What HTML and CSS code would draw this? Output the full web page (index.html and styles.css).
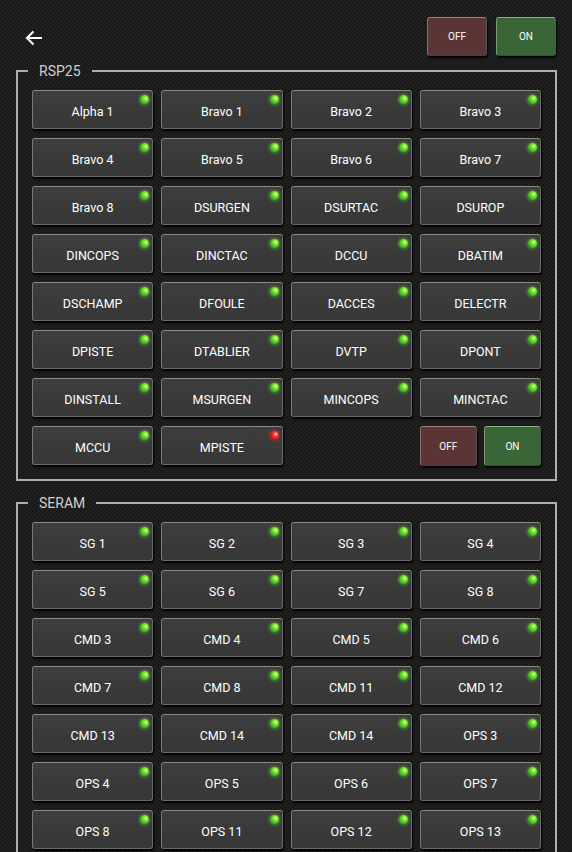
FILE: index.html
```html
<!DOCTYPE html>
<html>
<head>
<meta charset="utf-8">
<link rel="stylesheet" href="styles.css">
</head>
<body>
<div class="page">
  <header class="topbar">
    <button class="back" aria-label="Retour">
      <svg width="18" height="16" viewBox="0 0 18 16"><path d="M17 8H2.5M8.5 1.5L2 8l6.5 6.5" fill="none" stroke="#fff" stroke-width="2.2"/></svg>
    </button>
    <div class="switches">
      <button class="sw off">OFF</button>
      <button class="sw on">ON</button>
    </div>
  </header>

  <fieldset class="group">
    <legend>RSP25</legend>
    <div class="grid">
      <button class="key">Alpha 1<i class="led"></i></button>
      <button class="key">Bravo 1<i class="led"></i></button>
      <button class="key">Bravo 2<i class="led"></i></button>
      <button class="key">Bravo 3<i class="led"></i></button>
      <button class="key">Bravo 4<i class="led"></i></button>
      <button class="key">Bravo 5<i class="led"></i></button>
      <button class="key">Bravo 6<i class="led"></i></button>
      <button class="key">Bravo 7<i class="led"></i></button>
      <button class="key">Bravo 8<i class="led"></i></button>
      <button class="key">DSURGEN<i class="led"></i></button>
      <button class="key">DSURTAC<i class="led"></i></button>
      <button class="key">DSUROP<i class="led"></i></button>
      <button class="key">DINCOPS<i class="led"></i></button>
      <button class="key">DINCTAC<i class="led"></i></button>
      <button class="key">DCCU<i class="led"></i></button>
      <button class="key">DBATIM<i class="led"></i></button>
      <button class="key">DSCHAMP<i class="led"></i></button>
      <button class="key">DFOULE<i class="led"></i></button>
      <button class="key">DACCES<i class="led"></i></button>
      <button class="key">DELECTR<i class="led"></i></button>
      <button class="key">DPISTE<i class="led"></i></button>
      <button class="key">DTABLIER<i class="led"></i></button>
      <button class="key">DVTP<i class="led"></i></button>
      <button class="key">DPONT<i class="led"></i></button>
      <button class="key">DINSTALL<i class="led"></i></button>
      <button class="key">MSURGEN<i class="led"></i></button>
      <button class="key">MINCOPS<i class="led"></i></button>
      <button class="key">MINCTAC<i class="led"></i></button>
      <button class="key">MCCU<i class="led"></i></button>
      <button class="key">MPISTE<i class="led red"></i></button>
      <div class="spacer"></div>
      <div class="pair">
        <button class="sw off">OFF</button>
        <button class="sw on">ON</button>
      </div>
    </div>
  </fieldset>

  <fieldset class="group">
    <legend>SERAM</legend>
    <div class="grid">
      <button class="key">SG 1<i class="led"></i></button>
      <button class="key">SG 2<i class="led"></i></button>
      <button class="key">SG 3<i class="led"></i></button>
      <button class="key">SG 4<i class="led"></i></button>
      <button class="key">SG 5<i class="led"></i></button>
      <button class="key">SG 6<i class="led"></i></button>
      <button class="key">SG 7<i class="led"></i></button>
      <button class="key">SG 8<i class="led"></i></button>
      <button class="key">CMD 3<i class="led"></i></button>
      <button class="key">CMD 4<i class="led"></i></button>
      <button class="key">CMD 5<i class="led"></i></button>
      <button class="key">CMD 6<i class="led"></i></button>
      <button class="key">CMD 7<i class="led"></i></button>
      <button class="key">CMD 8<i class="led"></i></button>
      <button class="key">CMD 11<i class="led"></i></button>
      <button class="key">CMD 12<i class="led"></i></button>
      <button class="key">CMD 13<i class="led"></i></button>
      <button class="key">CMD 14<i class="led"></i></button>
      <button class="key">CMD 14<i class="led"></i></button>
      <button class="key">OPS 3<i class="led"></i></button>
      <button class="key">OPS 4<i class="led"></i></button>
      <button class="key">OPS 5<i class="led"></i></button>
      <button class="key">OPS 6<i class="led"></i></button>
      <button class="key">OPS 7<i class="led"></i></button>
      <button class="key">OPS 8<i class="led"></i></button>
      <button class="key">OPS 11<i class="led"></i></button>
      <button class="key">OPS 12<i class="led"></i></button>
      <button class="key">OPS 13<i class="led"></i></button>
    </div>
  </fieldset>
</div>
</body>
</html>
```

FILE: styles.css
```css
html, body {
  margin: 0;
  padding: 0;
  height: 100%;
  overflow: hidden;
}
body {
  background-color: #202020;
  background-image:
    linear-gradient(45deg, rgba(0,0,0,0.22) 25%, transparent 25%, transparent 75%, rgba(0,0,0,0.22) 75%),
    linear-gradient(45deg, rgba(0,0,0,0.22) 25%, transparent 25%, transparent 75%, rgba(0,0,0,0.22) 75%);
  background-size: 4px 4px;
  background-position: 0 0, 2px 2px;
  font-family: Roboto, "Liberation Sans", Arial, sans-serif;
  color: #fff;
}
.page {
  padding: 0 15px 0 16px;
}
.topbar {
  display: flex;
  align-items: center;
  justify-content: space-between;
  padding: 17px 3px 0 8px;
  height: 39px;
  margin-bottom: 7px;
}
.back {
  background: none;
  border: 0;
  padding: 0;
  width: 20px;
  height: 20px;
  display: flex;
  align-items: center;
  justify-content: center;
  margin-top: 3px;
}
.switches {
  display: flex;
  gap: 9px;
  margin-right: -2px;
}
.switches .sw {
  width: 60px;
  height: 39px;
}
.sw {
  border: 1px solid #8a8a8a;
  border-right-color: #555;
  border-bottom-color: #444;
  border-radius: 3px;
  color: #fff;
  font-family: Roboto, "Liberation Sans", Arial, sans-serif;
  font-size: 10px;
  font-weight: 400;
  box-shadow: 1px 2px 2px rgba(0,0,0,0.9);
  padding: 0;
}
.sw.off { background: #5b3535; border-top-color: #9a8080; border-left-color: #8a7070; }
.sw.on { background: #3a6536; border-top-color: #8fb08a; border-left-color: #7a9a75; }

.group {
  margin: 0;
  border: 2px solid #aeaeae;
  padding: 11px 14px 13px 14px;
}
.group + .group {
  margin-top: 14px;
}
.group legend {
  color: #cfcfcf;
  font-size: 14px;
  line-height: 16px;
  padding: 0 11px;
  margin-left: -4px;
}
.grid {
  display: grid;
  grid-template-columns: repeat(4, 1fr);
  gap: 9px 8px;
}
.key {
  position: relative;
  height: 39px;
  background: linear-gradient(#3d3d3d, #373737);
  border: 1px solid #6a6a6a;
  border-top-color: #8a8a8a;
  border-left-color: #7a7a7a;
  border-radius: 3px;
  box-shadow: 1px 2px 2px rgba(0,0,0,0.95);
  color: #fff;
  font-family: Roboto, "Liberation Sans", Arial, sans-serif;
  font-size: 12.5px;
  font-weight: 400;
  padding: 3px 0 0;
}
.led {
  position: absolute;
  top: 4px;
  right: 3px;
  width: 9px;
  height: 9px;
  border-radius: 50%;
  background: radial-gradient(circle at 65% 35%, #e8ffd0 0, #8cf040 22%, #4cc420 55%, #2d8a10 100%);
  box-shadow: 0 0 3px 1px rgba(90, 220, 40, 0.55);
}
.led.red {
  background: radial-gradient(circle at 65% 35%, #ffe0e0 0, #ff4040 25%, #d01818 60%, #8a0a0a 100%);
  box-shadow: 0 0 3px 1px rgba(230, 40, 40, 0.55);
}
.pair {
  display: flex;
  gap: 7px;
}
.pair .sw {
  flex: 1;
  height: 40px;
}
```
